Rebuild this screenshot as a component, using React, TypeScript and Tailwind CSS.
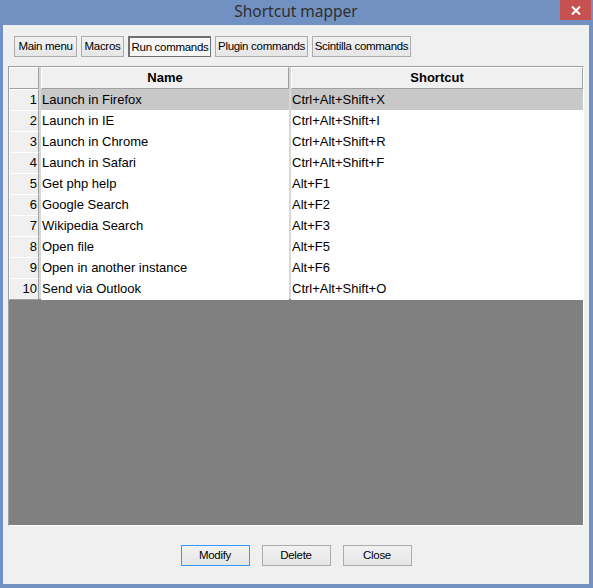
import React from 'react'

const rows: [string, string][] = [
  ['Launch in Firefox', 'Ctrl+Alt+Shift+X'],
  ['Launch in IE', 'Ctrl+Alt+Shift+I'],
  ['Launch in Chrome', 'Ctrl+Alt+Shift+R'],
  ['Launch in Safari', 'Ctrl+Alt+Shift+F'],
  ['Get php help', 'Alt+F1'],
  ['Google Search', 'Alt+F2'],
  ['Wikipedia Search', 'Alt+F3'],
  ['Open file', 'Alt+F5'],
  ['Open in another instance', 'Alt+F6'],
  ['Send via Outlook', 'Ctrl+Alt+Shift+O'],
]

const tabs = [
  { label: 'Main menu', w: 'w-[63px]' },
  { label: 'Macros', w: 'w-[43px]' },
  { label: 'Run commands', w: 'w-[83px]', active: true },
  { label: 'Plugin commands', w: 'w-[93px]' },
  { label: 'Scintilla commands', w: 'w-[99px]' },
]

const uiFont = "font-['Liberation_Sans',Arial,sans-serif] text-[11.5px] tracking-[-0.3px] text-black"

function TabButton({ label, w, active }: { label: string; w: string; active?: boolean }) {
  if (active) {
    return (
      <div className={`${w} h-[21px] flex items-center justify-center border border-[#707070] border-t-2 border-l-2 bg-[#f7f7f7] ${uiFont}`}>
        <span className="pt-[2px]">{label}</span>
      </div>
    )
  }
  return (
    <div className={`${w} h-[21px] flex items-center justify-center border border-[#acacac] bg-gradient-to-b from-[#f2f2f2] to-[#e6e6e6] ${uiFont}`}>
      {label}
    </div>
  )
}

function DialogButton({ label, primary }: { label: string; primary?: boolean }) {
  return (
    <div
      className={`w-[69px] h-[21px] flex items-center justify-center border bg-gradient-to-b from-[#f2f2f2] to-[#e6e6e6] ${
        primary ? 'border-[#3399ff]' : 'border-[#acacac]'
      } ${uiFont}`}
    >
      {label}
    </div>
  )
}

const headCell =
  'bg-[#f0f0f0] border border-t-white border-l-white border-r-[#a0a0a0] border-b-[#a0a0a0]'

export default function App() {
  return (
    <div className="w-[593px] h-[588px] bg-[#7191c2] flex flex-col pl-[3px] pr-[4px] pb-[4px]">
      {/* Title bar */}
      <div className="h-[25px] relative flex items-center justify-center">
        <span className="font-['Noto_Sans',sans-serif] text-[15.5px] text-[#2e2e2e] leading-none -mt-[2px]">
          Shortcut mapper
        </span>
        <div className="absolute right-[-2px] top-0 w-[31px] h-[20px] bg-[#c75050] flex items-center justify-center">
          <svg width="10" height="9" viewBox="0 0 10 9">
            <path d="M1 0.5 L9 8.5 M9 0.5 L1 8.5" stroke="white" strokeWidth="2" />
          </svg>
        </div>
      </div>

      {/* Client area */}
      <div className="flex-1 bg-[#f0f0f0] flex flex-col">
        <div className="flex gap-[4px] pl-[11px] pt-[11px]">
          {tabs.map((t) => (
            <TabButton key={t.label} {...t} />
          ))}
        </div>

        {/* Grid */}
        <div className="mt-[9px] mx-[5px] h-[460px] bg-[#808080] border border-t-[#a0a0a0] border-l-[#a0a0a0] border-r-white border-b-white flex flex-col">
          <div className="bg-[#d8d8d8] flex flex-col gap-[2px] pb-[2px] font-['Liberation_Sans',Arial,sans-serif] text-[13px] text-black">
            <div className="grid grid-cols-[30px_248px_1fr] gap-x-[2px] h-[20px]">
              <div className={headCell} />
              <div className={`${headCell} flex items-center justify-center font-bold`}>Name</div>
              <div className={`${headCell} flex items-center justify-center font-bold`}>Shortcut</div>
            </div>
            {rows.map(([name, key], i) => (
              <div key={name} className="grid grid-cols-[30px_248px_1fr] gap-x-[2px] h-[19px]">
                <div className={`${headCell} flex items-center justify-end pr-[1px]`}>{i + 1}</div>
                <div className={`${i === 0 ? 'bg-[#c8c8c8]' : 'bg-white'} flex items-center pl-[1px]`}>{name}</div>
                <div className={`${i === 0 ? 'bg-[#c8c8c8]' : 'bg-white'} flex items-center pl-[1px]`}>{key}</div>
              </div>
            ))}
          </div>
        </div>

        <div className="flex justify-center gap-[12px] mt-[19px]">
          <DialogButton label="Modify" primary />
          <DialogButton label="Delete" />
          <DialogButton label="Close" />
        </div>
      </div>
    </div>
  )
}
